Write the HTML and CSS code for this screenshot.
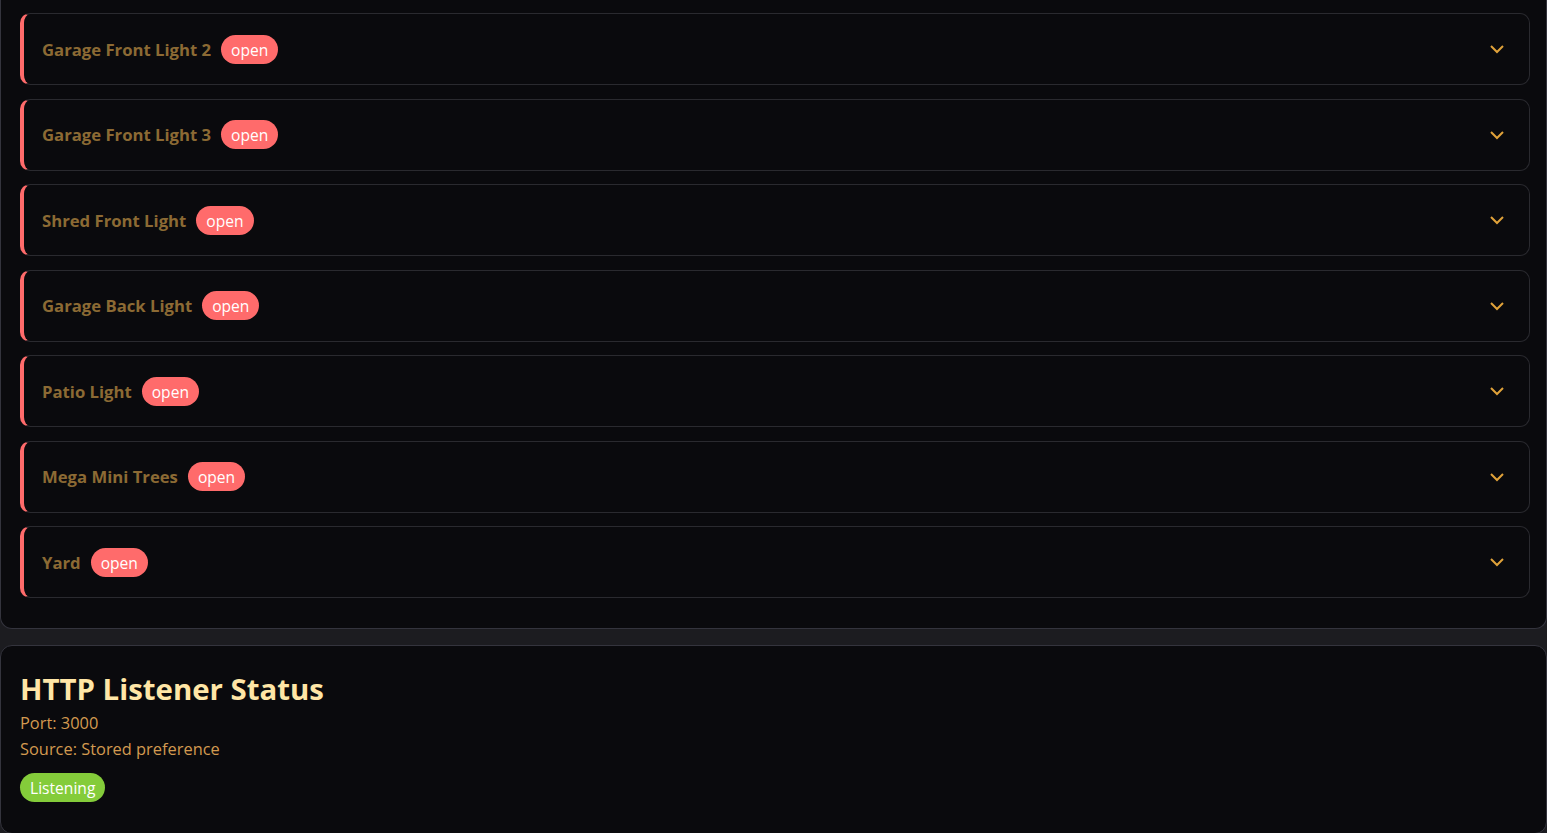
FILE: index.html
```html
<!DOCTYPE html>
<html lang="en">
<head>
<meta charset="utf-8">
<title>Lights</title>
<link rel="stylesheet" href="styles.css">
</head>
<body>
  <section class="panel panel--continued">
    <div class="device-list">
      <div class="device">
        <div class="device-head"><span class="device-name">Garage Front Light 2</span><span class="pill pill--open">open</span></div>
        <svg class="chevron" viewBox="0 0 16 16"><polyline points="2,5 8,11 14,5"/></svg>
      </div>
      <div class="device">
        <div class="device-head"><span class="device-name">Garage Front Light 3</span><span class="pill pill--open">open</span></div>
        <svg class="chevron" viewBox="0 0 16 16"><polyline points="2,5 8,11 14,5"/></svg>
      </div>
      <div class="device">
        <div class="device-head"><span class="device-name">Shred Front Light</span><span class="pill pill--open">open</span></div>
        <svg class="chevron" viewBox="0 0 16 16"><polyline points="2,5 8,11 14,5"/></svg>
      </div>
      <div class="device">
        <div class="device-head"><span class="device-name">Garage Back Light</span><span class="pill pill--open">open</span></div>
        <svg class="chevron" viewBox="0 0 16 16"><polyline points="2,5 8,11 14,5"/></svg>
      </div>
      <div class="device">
        <div class="device-head"><span class="device-name">Patio Light</span><span class="pill pill--open">open</span></div>
        <svg class="chevron" viewBox="0 0 16 16"><polyline points="2,5 8,11 14,5"/></svg>
      </div>
      <div class="device">
        <div class="device-head"><span class="device-name">Mega Mini Trees</span><span class="pill pill--open">open</span></div>
        <svg class="chevron" viewBox="0 0 16 16"><polyline points="2,5 8,11 14,5"/></svg>
      </div>
      <div class="device">
        <div class="device-head"><span class="device-name">Yard</span><span class="pill pill--open">open</span></div>
        <svg class="chevron" viewBox="0 0 16 16"><polyline points="2,5 8,11 14,5"/></svg>
      </div>
    </div>
  </section>

  <section class="panel panel--status">
    <h2 class="status-title">HTTP Listener Status</h2>
    <p class="status-line">Port: 3000</p>
    <p class="status-line">Source: Stored preference</p>
    <span class="pill pill--ok">Listening</span>
  </section>
</body>
</html>
```

FILE: styles.css
```css
html, body {
  margin: 0;
  padding: 0;
}

body {
  background: #1c1c20;
  font-family: "Open Sans", "Noto Sans", sans-serif;
  height: 833px;
  overflow: hidden;
}

.panel {
  background: #0a0a0d;
  border: 1px solid #34343d;
  border-radius: 12px;
  box-sizing: border-box;
}

.panel--continued {
  border-top: 0;
  border-top-left-radius: 0;
  border-top-right-radius: 0;
  padding: 13px 16px 30px 19px;
}

.device-list {
  display: flex;
  flex-direction: column;
  gap: 13.5px;
}

.device {
  display: flex;
  align-items: center;
  justify-content: space-between;
  height: 72px;
  box-sizing: border-box;
  border: 1px solid #2a2a2f;
  border-left: 4px solid #ff6b6b;
  border-radius: 10px;
  padding: 0 24px 0 18px;
}

.device-head {
  display: flex;
  align-items: center;
  gap: 10px;
}

.device-name {
  color: #8c6a34;
  font-size: 16.7px;
  font-weight: 700;
}

.pill {
  display: inline-block;
  border-radius: 999px;
  color: #ffffff;
  font-size: 15.6px;
  line-height: 21px;
  padding: 5px 10px 3px;
}

.pill--open {
  background: #ff6b6b;
}

.pill--ok {
  background: #84cc3a;
}

.chevron {
  width: 16px;
  height: 16px;
  fill: none;
  stroke: #e0a23a;
  stroke-width: 2;
}

.panel--status {
  margin-top: 16px;
  padding: 26px 20px 30px 19px;
  height: 189px;
}

.status-title {
  margin: 0 0 4px;
  color: #ffe6a6;
  font-size: 29.4px;
  line-height: 34px;
  font-weight: 700;
}

.status-line {
  margin: 0;
  color: #d39a50;
  font-size: 16.4px;
  line-height: 26px;
}

.panel--status .pill {
  margin-top: 11px;
}
```
